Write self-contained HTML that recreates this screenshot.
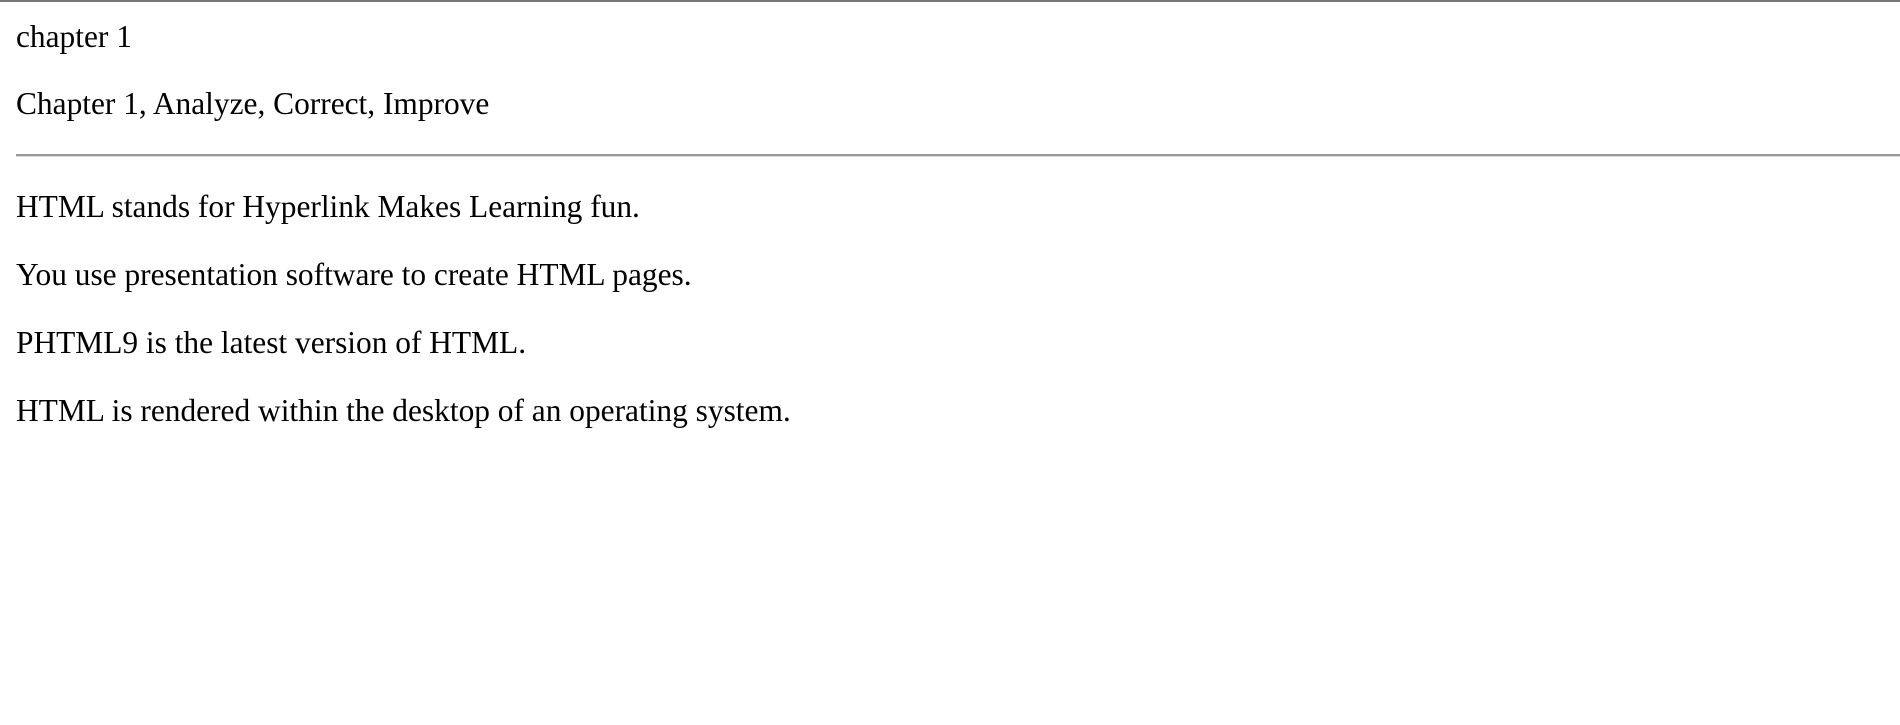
<!DOCTYPE html>
<html><head><meta charset="utf-8"><style>
html,body{margin:0;padding:0;background:#fff;}
body{padding:16px;padding-top:17px;font-family:"Liberation Serif",serif;font-size:31.4px;color:#000;border-top:2px solid #777;}
p{margin:32px 0;line-height:36px;}
.first{margin:0 0 -1px 0;line-height:36px;}
hr{margin:28px -16px 32px 0;border:0;border-top:2px solid #999;border-bottom:1px solid #ddd;height:0;}
</style></head><body>
<div class="first">chapter 1</div>
<p>Chapter 1, Analyze, Correct, Improve</p>
<hr>
<p>HTML stands for Hyperlink Makes Learning fun.</p>
<p>You use presentation software to create HTML pages.</p>
<p>PHTML9 is the latest version of HTML.</p>
<p>HTML is rendered within the desktop of an operating system.</p>
</body></html>
